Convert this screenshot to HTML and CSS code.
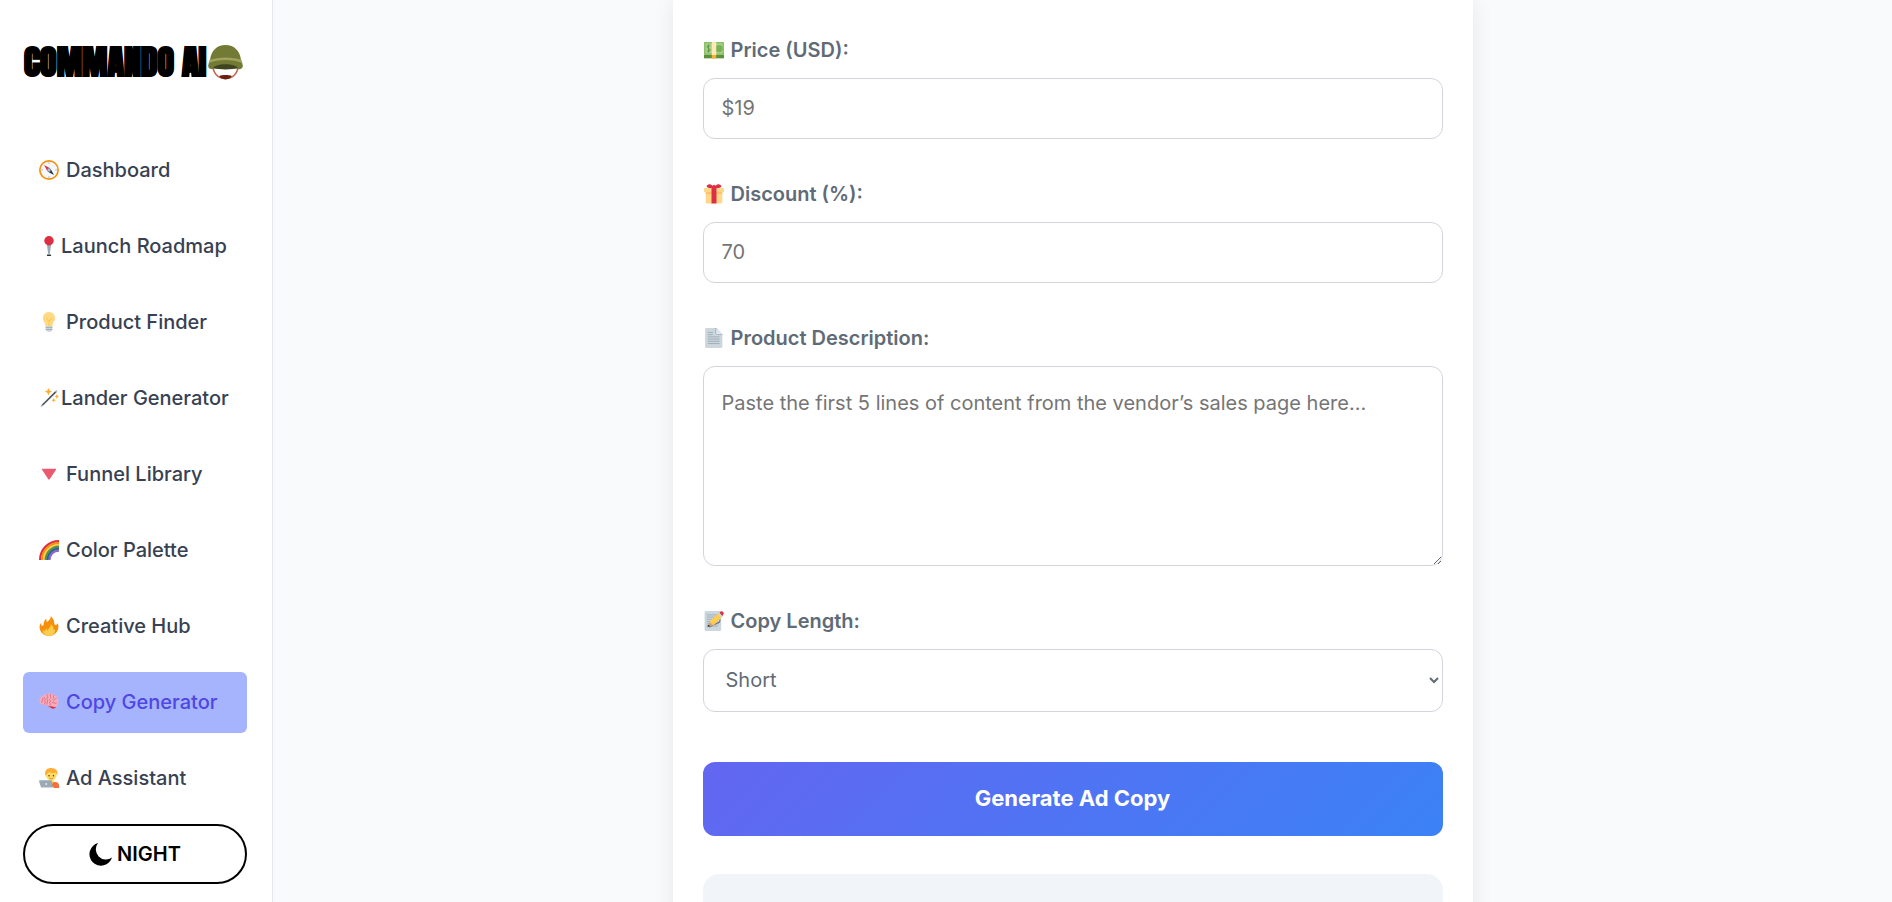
FILE: index.html
```html
<!DOCTYPE html>
<html lang="en">
<head>
<meta charset="utf-8">
<title>Commando AI - Copy Generator</title>
<link rel="stylesheet" href="styles.css">
</head>
<body>
<div class="app">
  <aside class="sidebar">
    <div class="logo">
      <span class="logo-text">COMMANDO AI</span>
      <svg class="logo-icon" viewBox="0 0 36 36" aria-hidden="true">
        <path d="M5 20c0 9 5 14.500 13 14.500S31 29 31 20" fill="#fff" stroke="#c1694f" stroke-width="1.600"/>
        <path d="M11.500 32c3-1.500 10-1.500 13 0-2 4.500-11 4.500-13 0z" fill="#6b2110"/>
        <path d="M5 18h26v6c-7 1.500-19 1.500-26 0z" fill="#3e4420"/>
        <path d="M2 16C3 6 9 0 18 0s15 6 16 16z" fill="#737a35"/>
        <path d="M1 18c8-4.500 26-4.500 34 0l.8 3c.3 3-1.800 4-4.800 4C31 18 5 18 5 25c-3 0-5-1-4.800-4z" fill="#737a35"/>
        <path d="M1.500 15.500c9-3.500 24-3.500 33 0l.8 3c-9-4-25.600-4-34.600 0z" fill="#a0a35c"/>
      </svg>
    </div>
    <nav class="nav">
      <a class="nav-link" href="#">
        <svg class="icon" viewBox="0 0 36 36" aria-hidden="true"><circle cx="18" cy="18" r="16.500" fill="#f5f8fa" stroke="#f4900c" stroke-width="3"/><path d="M18 4v3M18 29v3M4 18h3M29 18h3" stroke="#99aab5" stroke-width="1.500"/><path d="M9 9l11 6-5 5z" fill="#dd2e44"/><path d="M27 27l-11-6 5-5z" fill="#292f33"/><circle cx="18" cy="18" r="3.500" fill="#8899a6"/><circle cx="18" cy="18" r="1.500" fill="#e1e8ed"/></svg>
        <span>Dashboard</span></a>
      <a class="nav-link tight" href="#">
        <svg class="icon" viewBox="0 0 36 36" aria-hidden="true"><ellipse cx="18" cy="34.500" rx="4" ry="1.500" fill="#292f33"/><path d="M14 14h8l-2.800 20h-2.400z" fill="#99aab5"/><circle cx="18" cy="8.500" r="8.500" fill="#dd2e44"/></svg>
        <span>Launch Roadmap</span></a>
      <a class="nav-link" href="#">
        <svg class="icon" viewBox="0 0 36 36" aria-hidden="true"><path d="M29 11c0-6-4.500-11-11-11S7 5 7 11c0 7 5 8 5 16h12c0-8 5-9 5-16z" fill="#ffd983"/><path d="M13 11l5 6 5-6M18 17v10" fill="none" stroke="#ffcc4d" stroke-width="2"/><path d="M12 25h12v7c0 2-3 4-6 4s-6-2-6-4z" fill="#ccd6dd"/><path d="M12 28h12M12 31.500h12" stroke="#99aab5" stroke-width="1.500"/></svg>
        <span>Product Finder</span></a>
      <a class="nav-link tight" href="#">
        <svg class="icon" viewBox="0 0 36 36" aria-hidden="true"><path d="M5 32L31 6" stroke="#4a535b" stroke-width="3"/><path d="M4 31l2 2M30 5l2 2" stroke="#aab8c2" stroke-width="4"/><path d="M17 0l2 4.500L23.500 6.500 19 8.500l-2 5-2-5-4.500-2 4.500-2zM32 11l1.200 3 2.800 1.200-2.800 1.300L32 20l-1.200-3.500-2.800-1.300 2.800-1.200zM26.500 18l1.200 2.800 2.800 1.200-2.800 1.200L26.500 26l-1.200-2.800-2.800-1.200 2.800-1.200z" fill="#ffac33"/></svg>
        <span>Lander Generator</span></a>
      <a class="nav-link" href="#">
        <svg class="icon" viewBox="0 0 36 36" aria-hidden="true"><path d="M6.500 8.500h23c1.200 0 1.700 1 1 2L19.200 27.500c-.7 1-1.700 1-2.400 0L5.500 10.500c-.7-1-.2-2 1-2z" fill="#ea596e"/></svg>
        <span>Funnel Library</span></a>
      <a class="nav-link" href="#">
        <svg class="icon" viewBox="0 0 36 36" aria-hidden="true"><g fill="none" stroke-width="4"><path d="M2 36C2 17 17 2 36 2" stroke="#dd2e44"/><path d="M5.500 36C5.500 19 19 5.500 36 5.500" stroke="#f4900c"/><path d="M9 36C9 21 21 9 36 9" stroke="#ffcc4d"/><path d="M12 36c0-13 11-24 24-24" stroke="#5c913b"/><path d="M15.500 36c0-11 9.500-20.500 20.500-20.500" stroke="#226699"/><path d="M19 36c0-9.500 7.500-17 17-17" stroke="#9266cc"/></g></svg>
        <span>Color Palette</span></a>
      <a class="nav-link" href="#">
        <svg class="icon" viewBox="0 0 36 36" aria-hidden="true"><path d="M35 19c0-2-.4-4.500-1.300-6.300-.5 1.700-1.700 3.300-3.500 3.300-3.500 0-2.200-5-4-9C25.500 5 23.500 2.500 21 0c.3 3-.5 5-2.500 7-2 1.500-4.500 4-4.500 4S13 8.500 13.500 5C10 7 8.500 10.500 8.500 14c0 2-1 3.500-2.500 3.500S3.500 16 4 12c-2 2-3 5-3 8 0 9 7.500 16 17 16s17-7.500 17-17z" fill="#f4900c"/><path d="M28.500 24c-1 .8-2.500.5-3-1 1-3-1-6-4.500-8 1 4-1 5-3 7-1.500 1.500-2 2.500-2 4-1.500 0-2-2-2-4-2.500 1.500-3 4-3 5.500-2 0-3-1-4-3-1.500 6 4 11.500 11 11.500S30.500 30 28.500 24z" fill="#ffcc4d"/></svg>
        <span>Creative Hub</span></a>
      <a class="nav-link active" href="#" aria-current="page">
        <svg class="icon" viewBox="0 0 36 36" aria-hidden="true"><path d="M16 25l15 0c-1 5-6 6-9 4z" fill="#dd2e44"/><path d="M1 18C0 12 5 6 11 5c4-3 12-3 16 0 5 2 8 6 8 12 0 6-2 10-6 10-3 1-5-2-8-1-3 0-5-1-7-3-3 2-6 1-7-1-4 0-6-1-6-4z" fill="#f4abba"/><path d="M5 19c-1-4 3-4 2-8M9 22c3-1 3-4 1-6 2-2 1-4 0-6M15 5c-2 3 2 4 0 7-1 2 2 3 0 6s1 4-1 5M21 4c-2 3 1 4 0 7M19 14c3 1 2 4 0 5 2 2 1 4 1 5M27 6c-3 3 1 5-2 7M31 11c-3 1-2 4-5 5M24 19c4-1 3 3 7 1" fill="none" stroke="#e2637e" stroke-width="1.500" stroke-linecap="round"/></svg>
        <span>Copy Generator</span></a>
      <a class="nav-link" href="#">
        <svg class="icon" viewBox="0 0 36 36" aria-hidden="true"><path d="M12 36v-6c0-4 3-5 6-5h11c4 0 7 2 7 6v5z" fill="#f4703a"/><path d="M18 21h8v5c-2 3-6 3-8 0z" fill="#f9ca55"/><circle cx="22" cy="13" r="9.500" fill="#ffdc5d"/><path d="M11.500 14C9 4 15 0 22 0c8 0 13 5 11 14-1-1-1-4-3-6-5 2-10 0-12-1-3 1-4 5-6.500 7z" fill="#ffac33"/><circle cx="18" cy="14" r="1.300" fill="#662113"/><circle cx="26" cy="14" r="1.300" fill="#662113"/><path d="M18.500 18c2 1.800 5 1.800 7 0" fill="none" stroke="#c1694f" stroke-width="1.300"/><path d="M1.500 22H21c1 0 1.500.6 1.700 1.500L25 36H4L0 23.500c-.2-.9.500-1.500 1.500-1.500z" fill="#99aab5"/><path d="M4 34h23v2H4z" fill="#ccd6dd"/><circle cx="13" cy="29" r="1.800" fill="#e1e8ed"/></svg>
        <span>Ad Assistant</span></a>
      <button class="theme-toggle" type="button">
        <svg class="moon" viewBox="0 0 24 24" aria-hidden="true"><path d="M9.500 0A12 12 0 1 0 24 15 10.500 10.500 0 0 1 9.500 0z"/></svg>
        <span>NIGHT</span>
      </button>
    </nav>
  </aside>
  <main class="main">
    <form class="card">
      <div class="field">
        <label class="label" for="price">
          <svg class="icon" viewBox="0 0 36 36" aria-hidden="true"><path d="M0 5h36v28H0z" fill="#5c913b"/><path d="M0 3.500h36V27H0z" fill="#a7d28b"/><path d="M1.500 5h33v20.500h-33z" fill="none" stroke="#77b255" stroke-width="1.500"/><circle cx="27" cy="15.500" r="6.500" fill="#77b255"/><path d="M11 11c-2-2-6-1-5.500 1.500S11 15 11 18s-4.500 3-6 1M8 8v15" fill="none" stroke="#5c913b" stroke-width="1.500"/><path d="M14 3.500h8V27h-8z" fill="#ffe8b6"/><path d="M14 27h8v6h-8z" fill="#ffac33"/></svg>
          <span>Price (USD):</span></label>
        <input class="control" id="price" type="text" placeholder="$19">
      </div>
      <div class="field">
        <label class="label" for="discount">
          <svg class="icon" viewBox="0 0 36 36" aria-hidden="true"><path d="M3 15h30v17c0 2-1 3-3 3H6c-2 0-3-1-3-3z" fill="#fdd888"/><path d="M3 15h30v2H3z" fill="#fcab40"/><path d="M2 7h32c1 0 2 1 2 2v4c0 1-1 2-2 2H2c-1 0-2-1-2-2V9c0-1 1-2 2-2z" fill="#fdd888"/><path d="M13.500 6h9v29h-9z" fill="#dd2e44"/><path d="M18 7C15 7 6 8 5 5s4-6 7-4l4 2 2-2 2 2 4-2c3-2 8 1 7 4s-10 2-13 2z" fill="#dd2e44"/></svg>
          <span>Discount (%):</span></label>
        <input class="control" id="discount" type="text" placeholder="70">
      </div>
      <div class="field">
        <label class="label" for="description">
          <svg class="icon" viewBox="0 0 36 36" aria-hidden="true"><path d="M5 0h18l10 11v22c0 2-1 3-3 3H5c-2 0-3-1-3-3V3c0-2 1-3 3-3z" fill="#ccd6dd"/><path d="M21 0l12 11v2H21z" fill="#e1e8ed"/><path d="M21 0v9c0 2 1 3 3 3h9" fill="none" stroke="#99aab5" stroke-width="1.500"/><path d="M7 8h9M7 12h9M7 16h21M7 20h21M7 24h21M7 28h21" stroke="#99aab5" stroke-width="1.600"/></svg>
          <span>Product Description:</span></label>
        <textarea class="control area" id="description" placeholder="Paste the first 5 lines of content from the vendor’s sales page here..."></textarea>
      </div>
      <div class="field">
        <label class="label" for="length">
          <svg class="icon" viewBox="0 0 36 36" aria-hidden="true"><path d="M4 0h24c2 0 3 1 3 3v30c0 2-1 3-3 3H4c-2 0-3-1-3-3V3c0-2 1-3 3-3z" fill="#ccd6dd"/><path d="M5 7h20M5 11h20M5 15h20M5 19h20M5 23h22M5 27h20" stroke="#99aab5" stroke-width="1.500"/><path d="M9 29l19-9 1-5" fill="none" stroke="#66757f" stroke-width="2"/><path d="M7 28l3-9 7 7z" fill="#d99e82"/><path d="M7 28l1-3 2 2z" fill="#292f33" stroke="#292f33"/><path d="M10 19L26 4l7 6-16 16z" fill="#ffcc4d"/><path d="M25 5l3-2 6 6-3 3z" fill="#ccd6dd"/><path d="M28 3l2-2c3-2 7 3 5 5l-2 3z" fill="#dd2e44"/></svg>
          <span>Copy Length:</span></label>
        <select class="control select" id="length">
          <option>Short</option>
          <option>Medium</option>
          <option>Long</option>
        </select>
      </div>
      <button class="submit" type="button">Generate Ad Copy</button>
      <output class="result"></output>
    </form>
  </main>
</div>
</body>
</html>
```

FILE: styles.css
```css
* {
  box-sizing: border-box;
}

body {
  margin: 0;
  background: #f8fafc;
  font-family: Inter, "Liberation Sans", sans-serif;
  font-size: 20px;
  line-height: 32px;
}

.app {
  display: flex;
  height: 100vh;
  overflow: hidden;
}

.sidebar {
  flex: none;
  width: 273px;
  padding: 40px 25px 16px 23px;
  background: #fff;
  border-right: 1px solid #e5e7eb;
}

.logo {
  display: flex;
  align-items: center;
  gap: 2px;
  height: 44px;
  margin-bottom: 56px;
  padding-left: 1px;
}

.logo-text {
  font-family: Anton, Impact, "Roboto Condensed", "Liberation Sans Narrow", sans-serif;
  font-size: 34px;
  font-weight: 900;
  color: #000;
  white-space: nowrap;
  -webkit-text-stroke: 1px #000;
}

.logo-icon {
  flex: none;
  width: 35px;
  height: 35px;
}

.nav {
  display: flex;
  flex-direction: column;
  gap: 15px;
}

.nav-link {
  display: flex;
  align-items: center;
  gap: 7px;
  height: 61px;
  padding: 0 16px 2px;
  border-radius: 6px;
  color: #374151;
  font-weight: 500;
  text-decoration: none;
  white-space: nowrap;
}

.nav-link.tight {
  gap: 2px;
}

.nav-link.active {
  background: #a5b4fc;
  color: #4f46e5;
}

.icon {
  flex: none;
  width: 20px;
  height: 20px;
}

.theme-toggle {
  display: flex;
  align-items: center;
  justify-content: center;
  gap: 5px;
  height: 60px;
  border: 2px solid #000;
  border-radius: 30px;
  background: #fff;
  color: #000;
  font: 600 20px Inter, "Liberation Sans", sans-serif;
}

.moon {
  width: 23px;
  height: 23px;
}

.main {
  flex: 1;
  padding-right: 20px;
}

.card {
  max-width: 800px;
  min-height: 100vh;
  margin: 0 auto;
  padding: 34px 30px 0;
  background: #fff;
  box-shadow: 0 0 20px rgba(0, 0, 0, 0.08);
}

.field {
  display: flex;
  flex-direction: column;
  gap: 12px;
  margin-bottom: 39px;
}

.label {
  display: flex;
  align-items: center;
  gap: 7px;
  padding-left: 1px;
  color: #5f6b76;
  font-weight: 600;
}

.control {
  width: 100%;
  height: 61px;
  padding: 0 18px 1px;
  border: 1px solid #d1d5db;
  border-radius: 12px;
  background: #fff;
  color: #5f6b76;
  font: 400 20px/32px Inter, "Liberation Sans", sans-serif;
}

.control::placeholder {
  color: #757575;
}

.area {
  height: 200px;
  padding: 20px 18px;
}

.select {
  height: 63px;
}

.submit {
  display: block;
  width: 100%;
  height: 74px;
  margin: 50px 0 38px;
  padding: 0 0 2px;
  border: 0;
  border-radius: 12px;
  background: linear-gradient(135deg, #6366f1, #3b82f6);
  color: #fff;
  font: 700 22px Inter, "Liberation Sans", sans-serif;
}

.result {
  display: block;
  height: 120px;
  border-radius: 16px;
  background: #f1f5f9;
}
```
